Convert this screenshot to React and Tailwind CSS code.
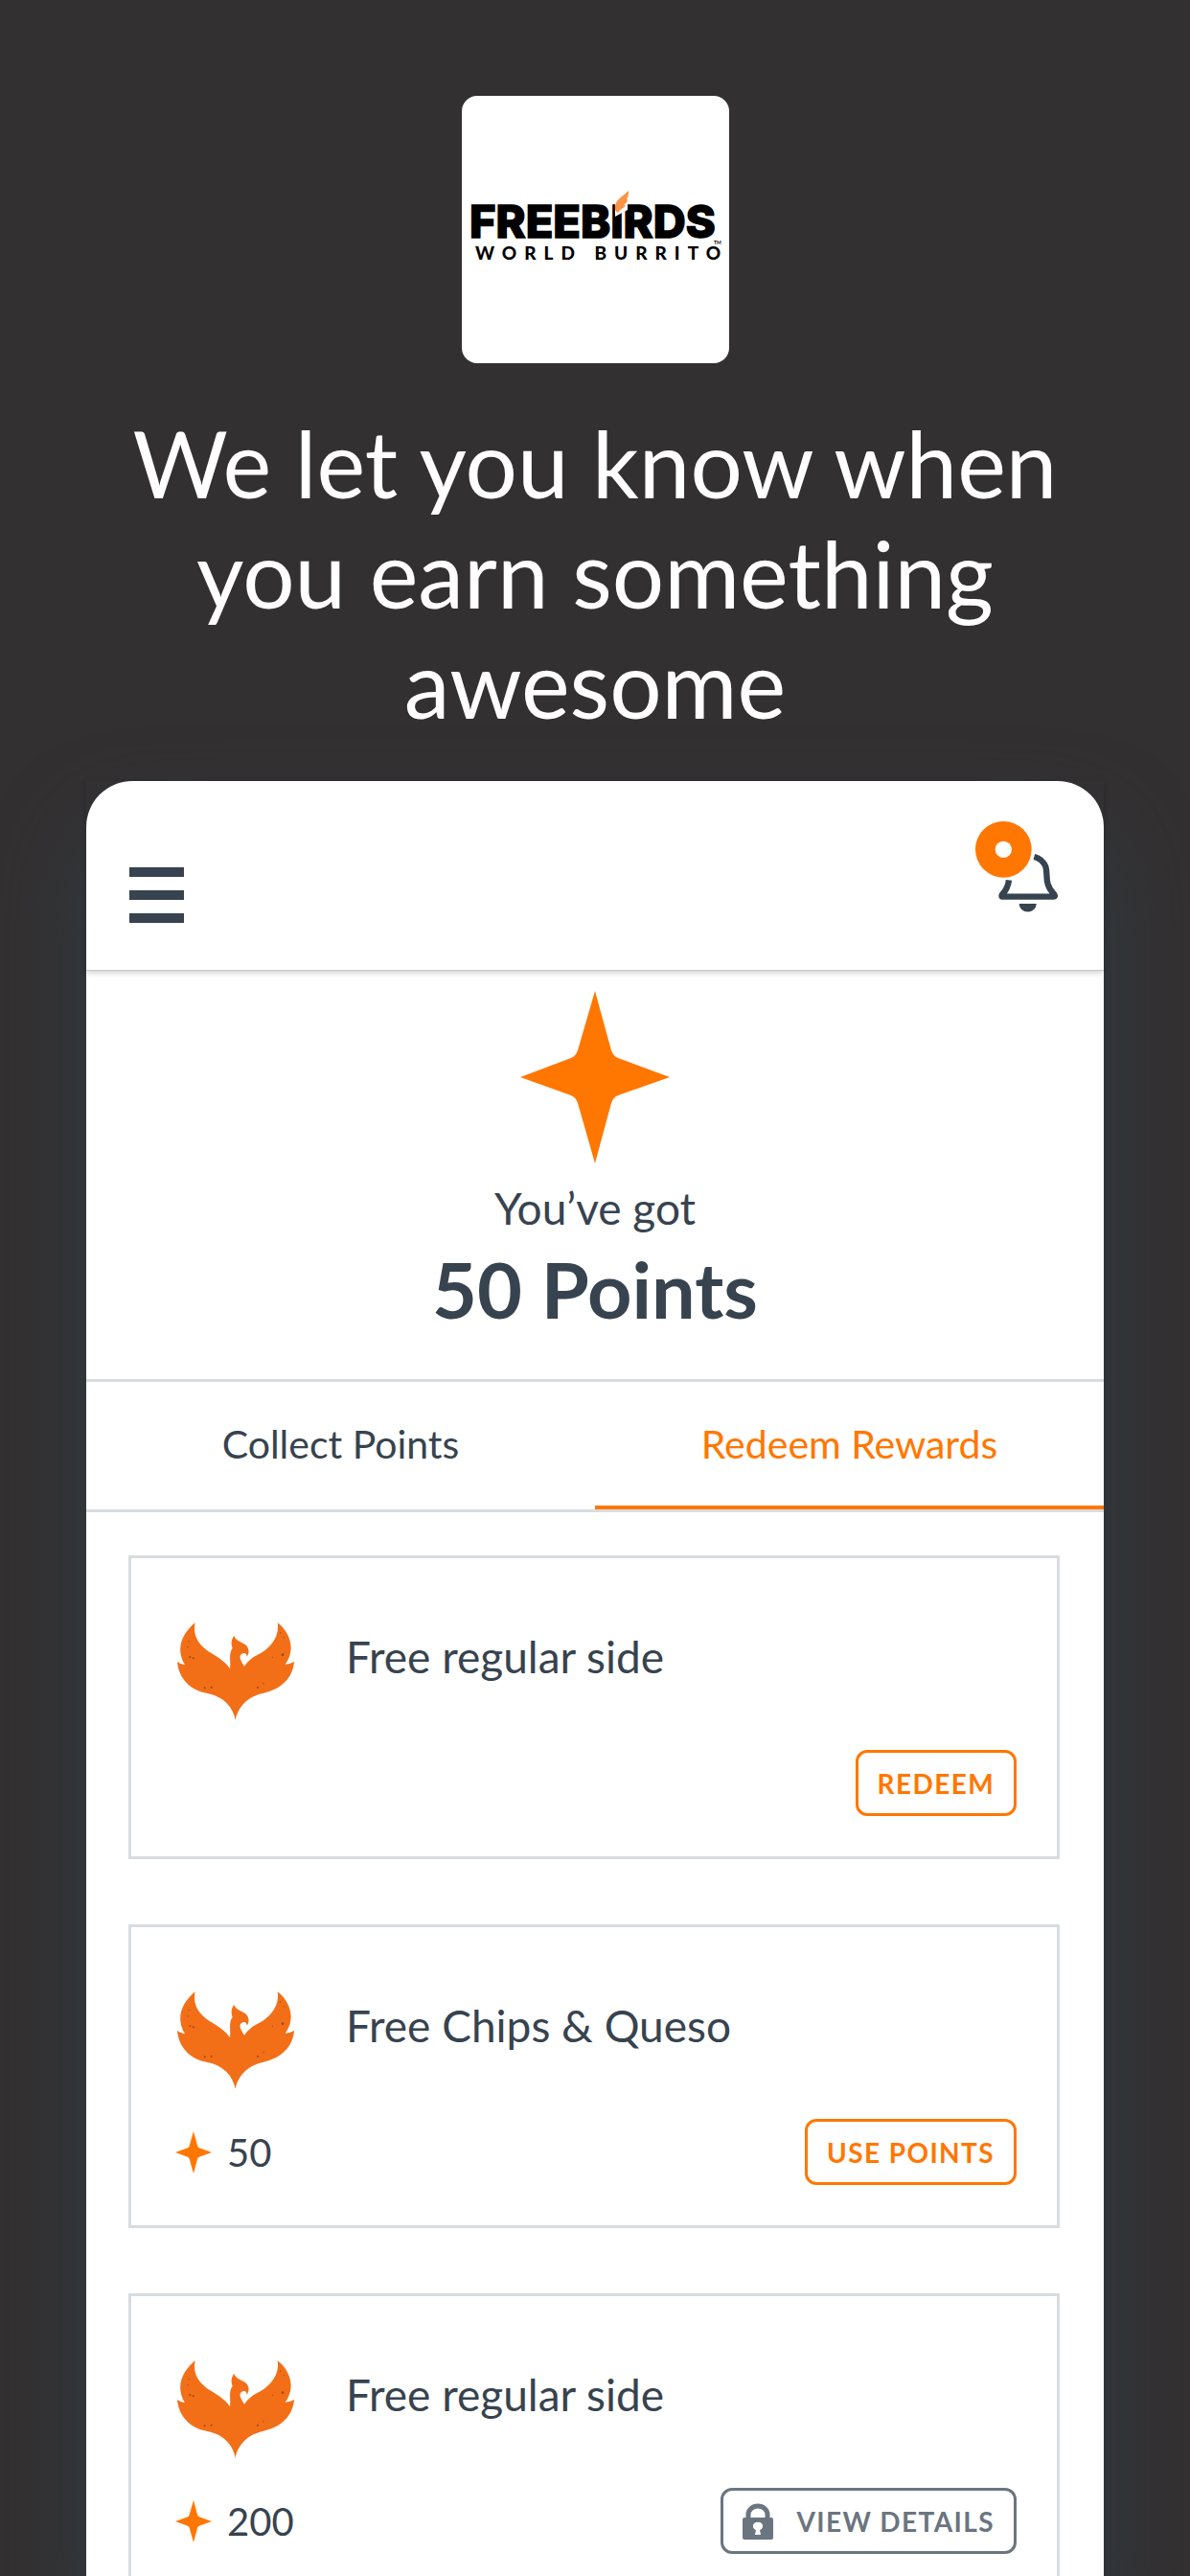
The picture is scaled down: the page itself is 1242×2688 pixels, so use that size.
import React, { useState } from "react";

const rewards = [
  { id: 1, title: "Free regular side", points: null, action: "REDEEM", locked: false },
  { id: 2, title: "Free Chips & Queso", points: 50, action: "USE POINTS", locked: false },
  { id: 3, title: "Free regular side", points: 200, action: "VIEW DETAILS", locked: true },
];

const Logo = () => (
  <svg viewBox="0 0 279 279" className="w-[279px] h-[279px] shrink-0 rounded-2xl bg-white" role="img" aria-label="Freebirds World Burrito">
    <text x="8" y="148" stroke="#000" strokeWidth="1.5" className="font-[Inter] font-extrabold text-[47px]">
      FREEBIRDS
    </text>
    <path d="M160 110 H173 V119 L160 126 Z" fill="#fff" />
    <path
      d="M174 99 C169 104 161 108 160 115 C159 118 161 121 163 122 C165 118 169 118 171 114 L169 114 C171 112 173 111 173 108 L172 108 C174 105 174 102 174 99 Z"
      fill="#fa9446"
    />
    <text x="14" y="171" className="font-[Lato] font-black text-[19px] tracking-[8px]">WORLD BURRITO</text>
    <text x="263" y="155" className="font-[Lato] font-bold text-[5px]">TM</text>
  </svg>
);

const Star = ({ className }) => (
  <svg viewBox="0 0 156 180" className={className} aria-hidden="true">
    <path
      d="M78 0 L95 62 Q97 68 102 70 L156 90 L102 109 Q97 111 95 117 L78 180 L60 117 Q58 111 53 109 L0 90 L53 70 Q58 68 60 62 Z"
      fill="#ff7700"
    />
  </svg>
);

const Phoenix = () => (
  <svg viewBox="-6 0 372 304" className="w-[124px] h-[102px]" aria-hidden="true">
    <path
      d="M56 0 C22 28 -10 76 24 132 Q10 130 0 122 C4 172 40 212 92 220 C144 230 174 262 182 304 C190 262 222 230 270 220 C326 208 362 172 366 122 Q352 130 338 130 C372 86 354 30 314 0 C322 50 282 84 256 98 Q226 112 210 136 C196 116 192 104 202 97 C212 92 218 98 218 106 C230 88 222 72 206 64 C190 56 180 50 178 40 C168 54 168 66 173 80 C160 96 168 120 165 144 C152 124 130 110 108 96 C76 76 46 48 56 0 Z"
      fill="#f26f18"
    />
    <g fill="#9c4710">
      <circle cx="40" cy="107" r="3" />
      <circle cx="50" cy="111" r="3" />
      <circle cx="33" cy="76" r="2" />
      <circle cx="36" cy="58" r="2" />
      <circle cx="86" cy="204" r="3" />
      <circle cx="107" cy="202" r="3" />
      <circle cx="330" cy="100" r="4" />
      <circle cx="323" cy="32" r="2" />
      <circle cx="334" cy="46" r="2" />
      <circle cx="298" cy="108" r="2" />
      <circle cx="252" cy="202" r="3" />
      <circle cx="270" cy="190" r="2" />
    </g>
  </svg>
);

const Bell = () => (
  <svg viewBox="0 0 258 285" className="w-[86px] h-[95px]" aria-hidden="true">
    <path
      d="M105 184 Q102 210 84 229 Q80 236 86 236 H244 Q252 236 246 228 C214 196 228 166 220 142 Q210 118 184 111"
      fill="none"
      stroke="#37434f"
      strokeWidth="19"
    />
    <path d="M137 258 H191 C189 292 139 292 137 258 Z" fill="#37434f" />
    <circle cx="88" cy="88" r="88" fill="#ff7700" />
    <circle cx="88" cy="88" r="26" fill="#fff" />
  </svg>
);

const Lock = () => (
  <svg viewBox="0 0 32 38" className="w-8 h-[38px]" aria-hidden="true">
    <path d="M6 17 V12 A10 9 0 0 1 26 12 V17" fill="none" stroke="#6b7580" strokeWidth="5" />
    <rect x="0" y="15" width="32" height="23" rx="2" fill="#6b7580" />
    <path d="M16 20 A4 4 0 0 1 18 28 L19 33 H13 L14 28 A4 4 0 0 1 16 20 Z" fill="#fff" />
  </svg>
);

const RewardCard = ({ reward }) => (
  <li className="flex flex-col justify-between h-[317px] border-3 border-[#d8dce0] pl-[46px] pr-[42px] pt-[67px] pb-[42px]">
    <div className="flex gap-[54px]">
      <Phoenix />
      <h2 className="text-[46px] leading-[72px]">{reward.title}</h2>
    </div>
    <div className="flex items-center justify-between">
      <div className="flex items-center gap-4">
        {reward.points && (
          <>
            <Star className="w-[38px] h-11" />
            <span className="text-[40px] leading-[48px]">{reward.points}</span>
          </>
        )}
      </div>
      <button
        type="button"
        className={`flex items-center h-[69px] gap-6 rounded-xl border-3 px-5 text-[28px] font-bold tracking-wider ${
          reward.locked ? "border-[#6b7580] text-[#6b7580]" : "border-[#ff7700] text-[#ff7700]"
        }`}
      >
        {reward.locked && <Lock />}
        {reward.action}
      </button>
    </div>
  </li>
);

const App = () => {
  const [tab, setTab] = useState("redeem");

  const tabClass = (name) =>
    `flex-1 border-b-4 text-[41px] ${
      tab === name ? "border-[#ff7700] text-[#ff7700]" : "border-transparent"
    }`;

  return (
    <div className="flex flex-col items-center h-screen overflow-hidden bg-[#333031] px-[90px] pt-[100px] font-[Lato,sans-serif]">
      <Logo />
      <h1 className="mt-[46px] text-center text-[96px] leading-[115px] text-white">
        We let you know when you earn something awesome
      </h1>

      <main className="mt-[45px] w-full flex-1 rounded-t-[48px] bg-white text-[#37434f] shadow-[0_50px_90px_#303c44]">
        <header className="flex items-start justify-between h-[198px] pl-[45px] pr-12 border-b border-[#c8c8c8] shadow-[0_2px_6px_rgba(0,0,0,0.2)]">
          <button type="button" aria-label="Menu" className="mt-[90px] flex flex-col gap-3.5">
            <span className="w-[57px] h-2.5 bg-[#37434f]" />
            <span className="w-[57px] h-2.5 bg-[#37434f]" />
            <span className="w-[57px] h-2.5 bg-[#37434f]" />
          </button>
          <button type="button" aria-label="Notifications" className="mt-[42px]">
            <Bell />
          </button>
        </header>

        <section className="flex flex-col items-center h-[426px] pt-[21px]">
          <Star className="w-[156px] h-[180px]" />
          <p className="mt-5 text-[46px] leading-[54px]">You’ve got</p>
          <p className="mt-2 text-[81px] leading-[98px] font-bold">50 Points</p>
        </section>

        {/* Tabs */}
        <div className="flex h-[139px] border-y-3 border-[#d8dce0]">
          <button type="button" className={tabClass("collect")} onClick={() => setTab("collect")}>
            Collect Points
          </button>
          <button type="button" className={tabClass("redeem")} onClick={() => setTab("redeem")}>
            Redeem Rewards
          </button>
        </div>

        <ul className="flex flex-col gap-[68px] pl-11 pr-[46px] pt-[45px]">
          {rewards.map((reward) => (
            <RewardCard key={reward.id} reward={reward} />
          ))}
        </ul>
      </main>
    </div>
  );
};

export default App;
